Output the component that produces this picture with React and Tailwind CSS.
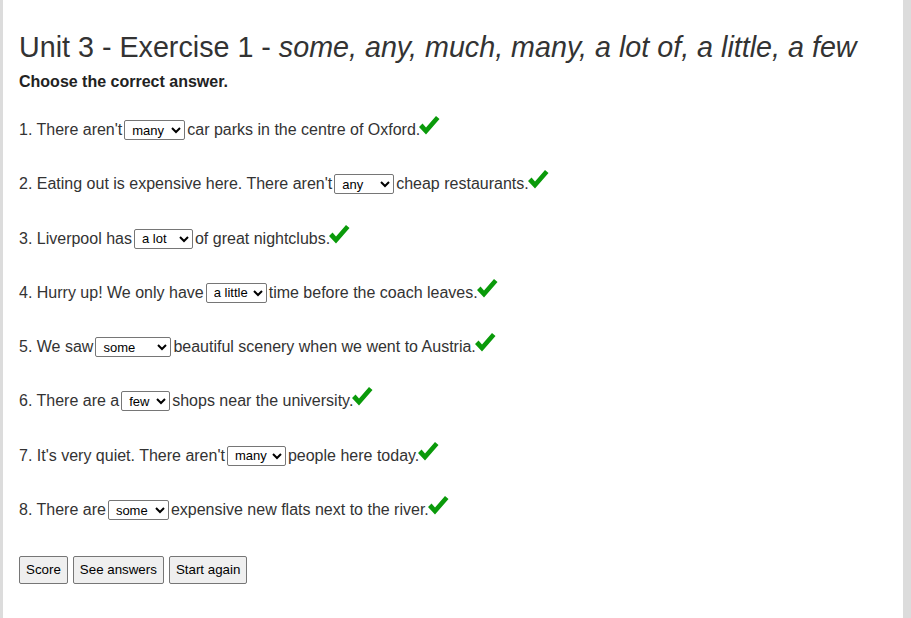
import React from 'react';

const questions = [
  { pre: "1. There aren't", value: 'many', opts: ['', 'much', 'many', 'a lot'], w: 'w-[61px]', post: 'car parks in the centre of Oxford.' },
  { pre: "2. Eating out is expensive here. There aren't", value: 'any', opts: ['', 'any', 'some', 'much'], w: 'w-[60px]', post: 'cheap restaurants.' },
  { pre: '3. Liverpool has', value: 'a lot', opts: ['', 'a lot', 'much', 'many'], w: 'w-[59px]', post: 'of great nightclubs.' },
  { pre: '4. Hurry up! We only have', value: 'a little', opts: ['', 'a little', 'a few', 'few'], w: 'w-[61px]', post: 'time before the coach leaves.' },
  { pre: '5. We saw', value: 'some', opts: ['', 'some', 'a few', 'many'], w: 'w-[76px]', post: 'beautiful scenery when we went to Austria.' },
  { pre: '6. There are a', value: 'few', opts: ['', 'few', 'little', 'lot'], w: 'w-[49px]', post: 'shops near the university.' },
  { pre: "7. It's very quiet. There aren't", value: 'many', opts: ['', 'many', 'much', 'some'], w: 'w-[59px]', post: 'people here today.' },
  { pre: '8. There are', value: 'some', opts: ['', 'some', 'any', 'much'], w: 'w-[61px]', post: 'expensive new flats next to the river.' },
];

const Tick = () => (
  <svg width="22" height="21" viewBox="0 0 22 21" className="self-start -mt-[3px] -ml-[2px] shrink-0">
    <path d="M1 12 L4.5 8.5 L8 12.5 L18 1 L21.5 4 L8 19.5 Z" fill="#0a9a0a" />
  </svg>
);

const Pregunta = ({ q, first }) => (
  <div className={`${first ? 'mt-[27px]' : 'mt-[30.3px]'} h-[24px] flex items-center text-[16px] text-[#333] whitespace-nowrap`}>
    <span>{q.pre}</span>
    <select
      defaultValue={q.value}
      className={`${q.w} h-[20px] mx-[2px] border border-[#767676] rounded-[2px] bg-white text-[13px] text-black pl-[3px] font-['Liberation_Sans',Arial,sans-serif]`}
    >
      {q.opts.map((o) => (
        <option key={o} value={o}>{o}</option>
      ))}
    </select>
    <span>{q.post}</span>
    <Tick />
  </div>
);

export default function App() {
  return (
    <div className="min-h-[618px] bg-[#dcdcdc] font-['Liberation_Sans',Arial,sans-serif]">
      <div className="ml-[3px] w-[900px] min-h-[618px] bg-white px-4 pt-[31px]">
        <h1 className="text-[28.7px] leading-[32px] text-[#333]">
          Unit 3 - Exercise 1 - <em>some, any, much, many, a lot of, a little, a few</em>
        </h1>
        <p className="mt-[10px] text-[16px] leading-[18px] font-bold text-[#222]">Choose the correct answer.</p>
        {questions.map((q, i) => (
          <Pregunta key={i} q={q} first={i === 0} />
        ))}
        <div className="mt-[34px] flex gap-[5px]">
          {['Score', 'See answers', 'Start again'].map((b) => (
            <button
              key={b}
              className="h-[28px] px-[6px] bg-[#efefef] border border-[#767676] rounded-[2px] text-[13.33px] text-black"
            >
              {b}
            </button>
          ))}
        </div>
      </div>
    </div>
  );
}
